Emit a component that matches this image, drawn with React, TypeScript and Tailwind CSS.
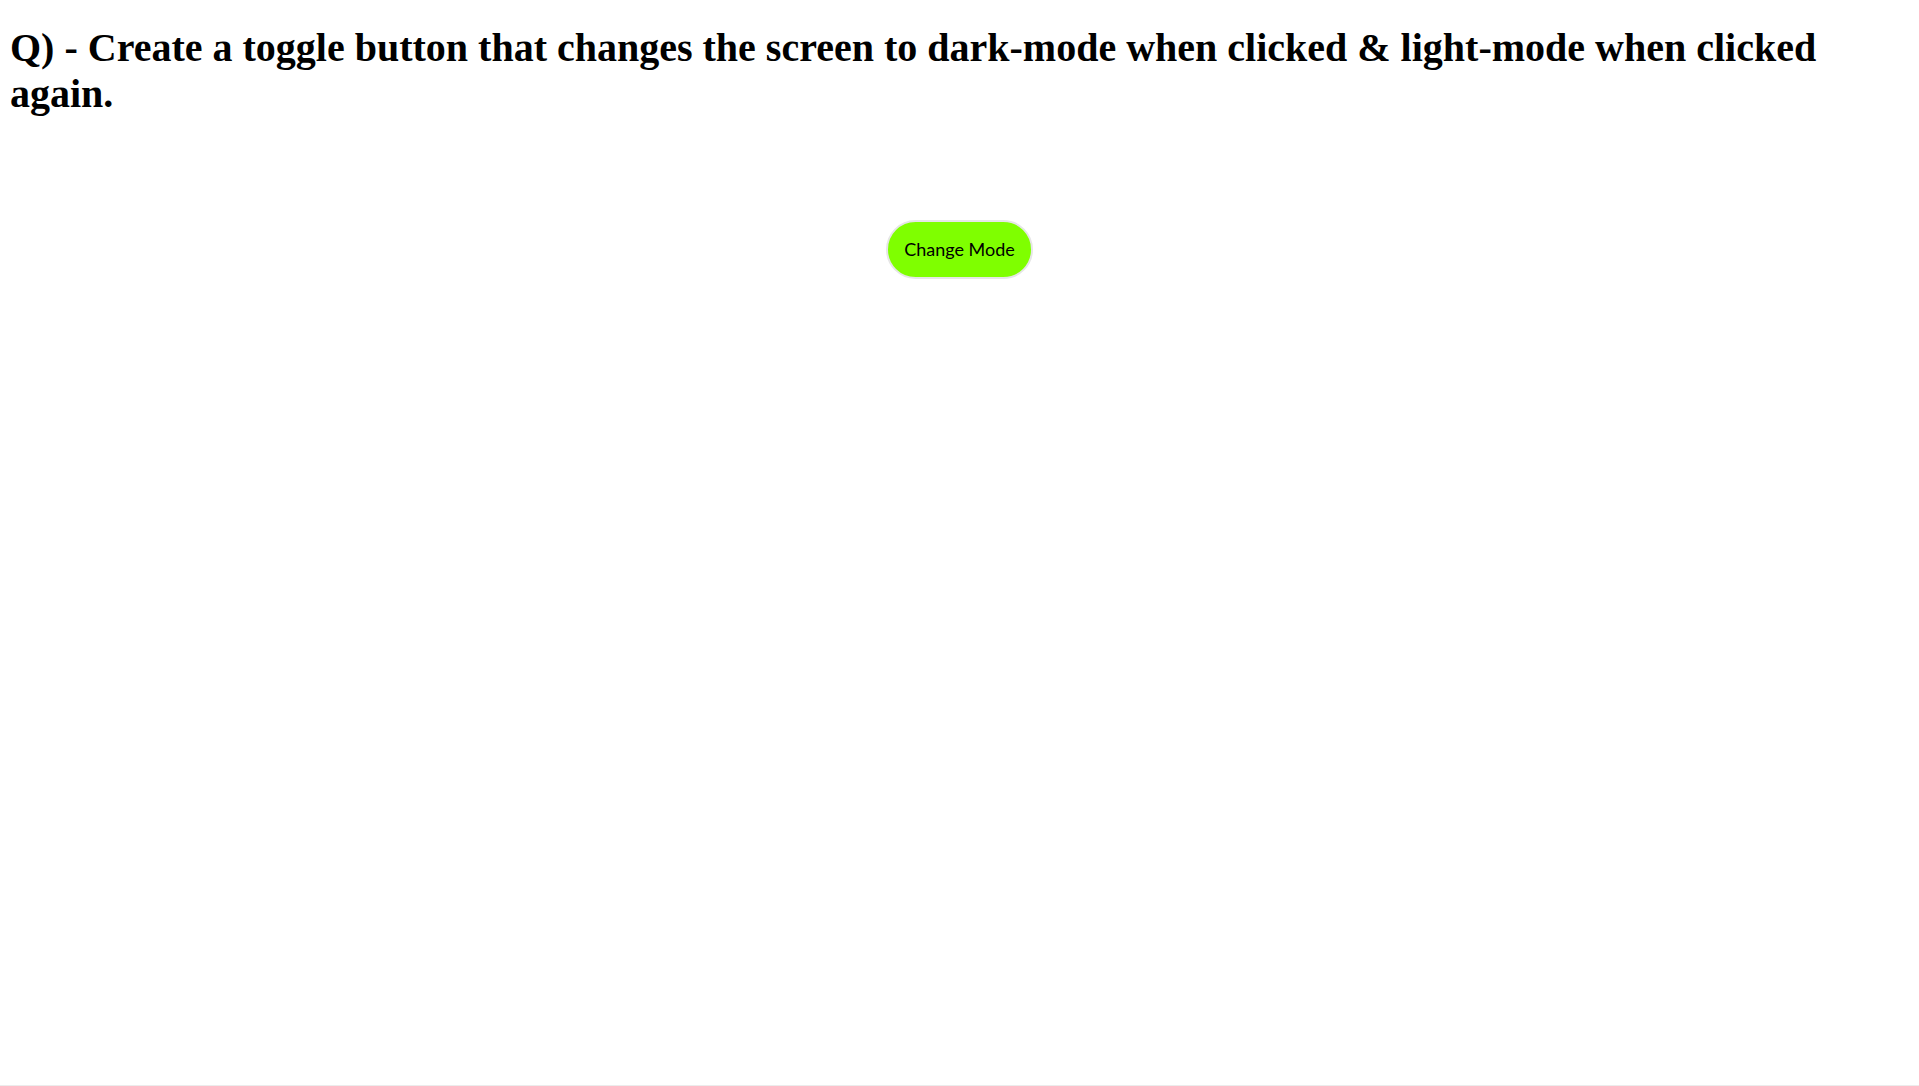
import { useState } from "react";

export default function App() {
  const [dark, setDark] = useState(false);

  return (
    <div
      className={`h-screen w-full border-b border-[#ececec] ${
        dark ? "bg-[#121212] text-white" : "bg-white text-black"
      }`}
    >
      <h1 className="m-0 pt-[25px] pl-[10px] pr-[10px] text-[40px] font-bold leading-[46px] font-['Liberation_Serif','Times_New_Roman',serif]">
        Q) - Create a toggle button that changes the screen to dark-mode when clicked &amp; light-mode when clicked again.
      </h1>

      <div className="flex justify-center mt-[103px]">
        <button
          onClick={() => setDark(!dark)}
          className="w-[147px] h-[59px] rounded-full border-2 border-[#e6e6e6] bg-[#7fff00] text-black text-[18px] font-['Lato','Open_Sans',sans-serif] cursor-pointer"
        >
          Change Mode
        </button>
      </div>
    </div>
  );
}
